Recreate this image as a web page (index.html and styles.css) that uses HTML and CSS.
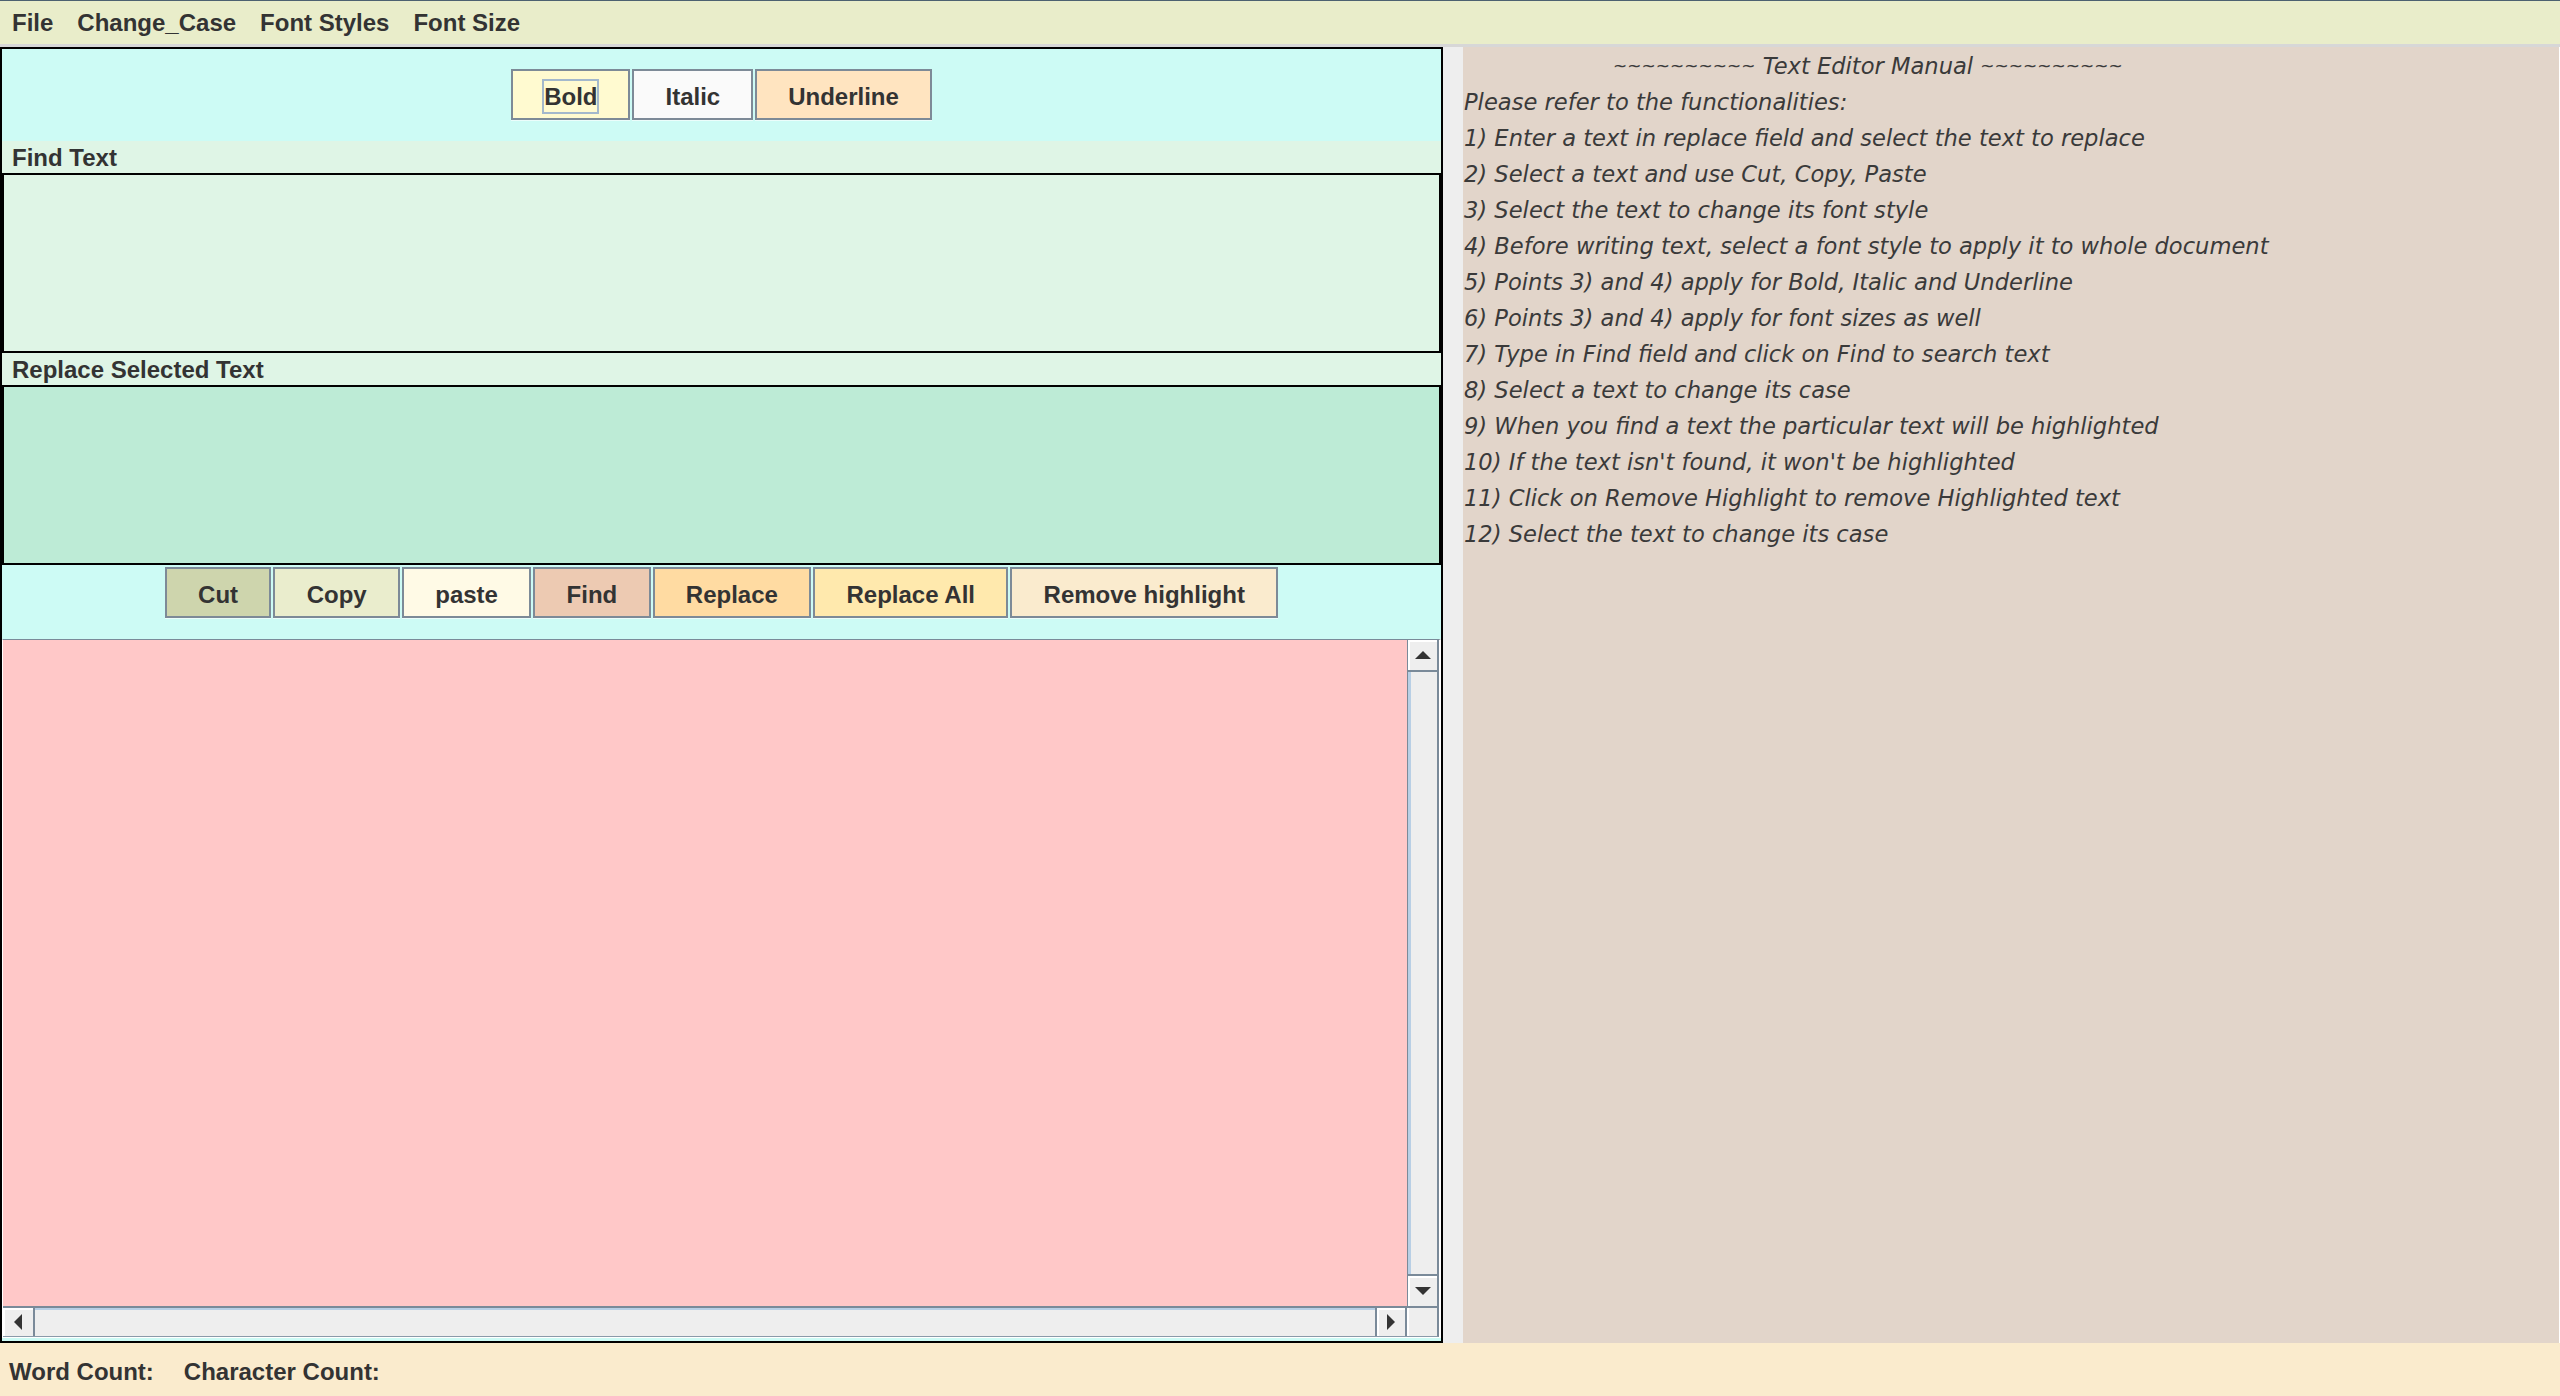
FILE: index.html
```html
<!DOCTYPE html>
<html>
<head>
<meta charset="utf-8">
<title>Text Editor</title>
<link rel="stylesheet" href="styles.css">
</head>
<body>
<div class="app">
  <nav class="menubar">
    <span class="menu">File</span>
    <span class="menu">Change_Case</span>
    <span class="menu">Font Styles</span>
    <span class="menu">Font Size</span>
  </nav>
  <main class="main">
    <section class="editor">
      <div class="toolbar top-tools">
        <button class="btn btn-bold"><span class="focus">Bold</span></button>
        <button class="btn btn-italic">Italic</button>
        <button class="btn btn-underline">Underline</button>
      </div>
      <div class="field-label">Find Text</div>
      <div class="field find-field"></div>
      <div class="field-label">Replace Selected Text</div>
      <div class="field replace-field"></div>
      <div class="toolbar edit-tools">
        <button class="btn btn-cut">Cut</button>
        <button class="btn btn-copy">Copy</button>
        <button class="btn btn-paste">paste</button>
        <button class="btn btn-find">Find</button>
        <button class="btn btn-replace">Replace</button>
        <button class="btn btn-replace-all">Replace All</button>
        <button class="btn btn-remove">Remove highlight</button>
      </div>
      <div class="scrollpane">
        <div class="viewport"></div>
        <div class="vscroll">
          <div class="arrow-btn up-btn"><span class="tri tri-up"></span></div>
          <div class="vtrack"></div>
          <div class="arrow-btn down-btn"><span class="tri tri-down"></span></div>
        </div>
        <div class="hscroll">
          <div class="harrow-btn left-btn"><span class="tri tri-left"></span></div>
          <div class="htrack"></div>
          <div class="harrow-btn right-btn"><span class="tri tri-right"></span></div>
        </div>
        <div class="corner"></div>
      </div>
    </section>
    <aside class="manual">
      <p class="line title"><span class="tilde">~~~~~~~~~~</span> Text Editor Manual <span class="tilde">~~~~~~~~~~</span></p>
      <p class="line">Please refer to the functionalities:</p>
      <p class="line">1) Enter a text in replace field and select the text to replace</p>
      <p class="line">2) Select a text and use Cut, Copy, Paste</p>
      <p class="line">3) Select the text to change its font style</p>
      <p class="line">4) Before writing text, select a font style to apply it to whole document</p>
      <p class="line">5) Points 3) and 4) apply for Bold, Italic and Underline</p>
      <p class="line">6) Points 3) and 4) apply for font sizes as well</p>
      <p class="line">7) Type in Find field and click on Find to search text</p>
      <p class="line">8) Select a text to change its case</p>
      <p class="line">9) When you find a text the particular text will be highlighted</p>
      <p class="line">10) If the text isn't found, it won't be highlighted</p>
      <p class="line">11) Click on Remove Highlight to remove Highlighted text</p>
      <p class="line">12) Select the text to change its case</p>
    </aside>
  </main>
  <footer class="statusbar">
    <span class="stat">Word Count:</span>
    <span class="stat">Character Count:</span>
  </footer>
</div>
</body>
</html>
```

FILE: styles.css
```css
html, body {
  margin: 0;
  padding: 0;
}
body {
  width: 2560px;
  height: 1396px;
  overflow: hidden;
  background: #eeeeee;
  font-family: "Liberation Sans", Arial, sans-serif;
  color: #333333;
}
.app {
  display: flex;
  flex-direction: column;
  height: 1396px;
}

/* menu bar */
.menubar {
  flex: none;
  height: 43px;
  box-sizing: content-box;
  border-top: 1px solid #4d6170;
  border-bottom: 3px solid #d7d7d7;
  background: #e9edca;
  display: flex;
  align-items: center;
  font-weight: bold;
  font-size: 24px;
}
.menu {
  padding: 1px 12px 0;
}

/* main */
.main {
  flex: none;
  height: 1296px;
  display: flex;
  gap: 20px;
}
.editor {
  flex: none;
  width: 1443px;
  box-sizing: border-box;
  border: 2px solid #000;
  background: #cdfbf5;
  display: flex;
  flex-direction: column;
}
.toolbar {
  flex: none;
  display: flex;
  justify-content: center;
  align-items: flex-start;
  gap: 2px;
}
.top-tools {
  height: 92px;
  box-sizing: border-box;
  padding-top: 20px;
}
.edit-tools {
  height: 74px;
  box-sizing: border-box;
  padding-top: 2px;
}
.btn {
  height: 51px;
  box-sizing: border-box;
  border: 2px solid #7d8a97;
  border-radius: 0;
  padding: 4px 31.3px 0;
  margin: 0;
  font-family: "Liberation Sans", Arial, sans-serif;
  font-weight: bold;
  font-size: 24px;
  color: #333333;
  display: inline-flex;
  align-items: center;
  justify-content: center;
  background: #fafafa;
  box-shadow: 0 1px 0 rgba(255, 255, 255, 0.6);
}
.top-tools .btn {
  padding-left: 31px;
  padding-right: 31px;
}
.focus {
  display: inline-block;
  line-height: 27px;
  padding: 2px 0;
  margin: -2px 0;
  box-shadow: 0 0 0 2px #a3b8cc;
}
.btn-bold { background: #fffad0; }
.btn-italic { background: #fafafa; }
.btn-underline { background: #ffe4c0; }
.btn-cut { background: #ced5ad; }
.btn-copy { background: #eaedcd; }
.btn-paste { background: #fffae6; }
.btn-find { background: #edcab2; }
.btn-replace { background: #ffdba2; }
.btn-replace-all { background: #ffe9ad; }
.btn-remove { background: #faebce; }

.field-label {
  flex: none;
  height: 32px;
  box-sizing: border-box;
  padding: 2px 0 0 10px;
  line-height: 30px;
  background: #dff5e6;
  font-weight: bold;
  font-size: 24px;
}
.field {
  flex: none;
  height: 180px;
  box-sizing: border-box;
  border: 2px solid #000;
}
.find-field { background: #dff5e6; }
.replace-field { background: #bdebd6; }

/* scroll pane */
.scrollpane {
  flex: none;
  height: 699px;
  box-sizing: border-box;
  border-top: 1px solid #7a8a99;
  border-left: 1px solid #ffffff;
  border-right: 2px solid #ffffff;
  border-bottom: 1px solid #ffffff;
  display: grid;
  grid-template-columns: 1fr 32px;
  grid-template-rows: 1fr 31px;
}
.viewport {
  background: #ffc8c8;
}
.vscroll {
  display: flex;
  flex-direction: column;
  background: #eeeeee;
  border-left: 1px solid #7a8a99;
  border-right: 2px solid #7a8a99;
}
.arrow-btn {
  flex: none;
  height: 32px;
  box-sizing: border-box;
  background: #eeeeee;
  box-shadow: inset 2px 2px 0 #ffffff;
  display: flex;
  align-items: center;
  justify-content: center;
}
.up-btn {
  border-bottom: 2px solid #7a8a99;
}
.down-btn {
  border-top: 2px solid #7a8a99;
}
.vtrack {
  flex: 1;
  box-shadow: inset 3px 0 0 #b8cfe5;
}
.hscroll {
  display: flex;
  background: #eeeeee;
  border-top: 2px solid #7a8a99;
  border-bottom: 1px solid #8a9aa9;
}
.harrow-btn {
  flex: none;
  width: 32px;
  box-sizing: border-box;
  background: #eeeeee;
  box-shadow: inset 2px 2px 0 #ffffff;
  display: flex;
  align-items: center;
  justify-content: center;
}
.left-btn {
  border-right: 2px solid #7a8a99;
}
.right-btn {
  border-left: 2px solid #7a8a99;
  border-right: 2px solid #7a8a99;
}
.htrack {
  flex: 1;
  box-shadow: inset 0 2px 0 #b8cfe5;
}
.corner {
  background: #eeeeee;
  border-top: 2px solid #7a8a99;
  border-right: 2px solid #7a8a99;
  border-bottom: 1px solid #8a9aa9;
  box-shadow: inset 2px 0 0 #ffffff;
}
.tri {
  display: block;
  width: 0;
  height: 0;
}
.tri-up {
  border-left: 8px solid transparent;
  border-right: 8px solid transparent;
  border-bottom: 8px solid #333333;
}
.tri-down {
  border-left: 8px solid transparent;
  border-right: 8px solid transparent;
  border-top: 8px solid #333333;
}
.tri-left {
  border-top: 8px solid transparent;
  border-bottom: 8px solid transparent;
  border-right: 8px solid #333333;
}
.tri-right {
  border-top: 8px solid transparent;
  border-bottom: 8px solid transparent;
  border-left: 8px solid #333333;
}

/* manual */
.manual {
  flex: 1;
  background: #e2d5ca;
  border-right: 1px solid #ffffff;
  padding: 1px 0 0 1px;
  font-family: "DejaVu Sans", sans-serif;
  font-style: italic;
  font-size: 22.6px;
  line-height: 36px;
  color: #3a3a3a;
}
.line {
  margin: 0;
  white-space: pre;
}
.title {
  padding-left: 149px;
}
.tilde {
  font-size: 17px;
  vertical-align: 2px;
}

/* status bar */
.statusbar {
  flex: 1;
  background: #faebcd;
  display: flex;
  align-items: center;
  gap: 30px;
  padding: 4px 0 0 9px;
  font-weight: bold;
  font-size: 24px;
}
```
